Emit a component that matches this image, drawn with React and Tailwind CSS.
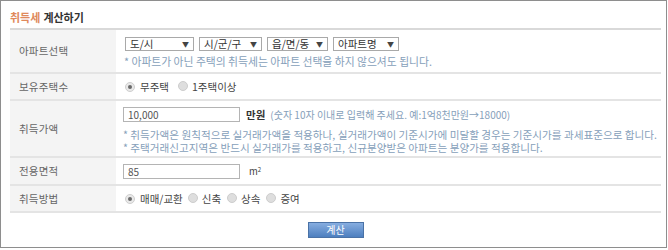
import React from "react";

const FONT = "font-['Noto_Sans_CJK_KR','Noto_Sans',sans-serif]";

function Select({ label, w }) {
  return (
    <span
      className={`inline-flex items-center justify-between h-[14px] border border-[#a9a9a9] bg-white pl-[4px] pr-[4px] text-[10.5px] leading-none text-[#333] ${w}`}
    >
      <span>{label}</span>
      <span className="text-[7px] text-[#444] ml-[4px]">▼</span>
    </span>
  );
}

function Radio({ checked }) {
  return checked ? (
    <span className="inline-flex items-center justify-center w-[10px] h-[10px] rounded-full bg-[#e9e9e9] border border-[#cfcfcf]">
      <span className="w-[4px] h-[4px] rounded-full bg-[#6a6a6a]" />
    </span>
  ) : (
    <span className="inline-block w-[10px] h-[10px] rounded-full bg-[#dedede] border border-[#cdcdcd]" />
  );
}

function Row({ label, h, children, align = "items-center" }) {
  return (
    <div className={`grid grid-cols-[106px_1fr] border-b-2 border-[#e4e4e4] ${h}`}>
      <div className="bg-[#f4f4f4] flex items-center pl-[9px] text-[10.5px] tracking-[0.2px] text-[#666]">
        {label}
      </div>
      <div className={`flex pl-[7px] ${align}`}>{children}</div>
    </div>
  );
}

export default function App() {
  return (
    <div className={`w-[668px] h-[250px] bg-white ${FONT}`}>
      <div className="w-[667px] h-[248px] border border-[#8e8e8e] pl-[9px] pr-[5px]">
        <div className="h-[27px] flex items-end pb-[5px] text-[11px] font-bold leading-none">
          <span className="text-[#e0895b]">취득세</span>
          <span className="text-[#333] ml-[3px]">계산하기</span>
        </div>
        <div className="border-t-2 border-[#d9d9d9]">
          <Row label="아파트선택" h="h-[44px]" align="items-start">
            <div className="flex flex-col pt-[7px]">
              <div className="flex gap-[5px] pl-[2px]">
                <Select label="도/시" w="w-[69px]" />
                <Select label="시/군/구" w="w-[63px]" />
                <Select label="읍/면/동" w="w-[61px]" />
                <Select label="아파트명" w="w-[66px]" />
              </div>
              <div className="mt-[4px] pl-[1px] text-[10.8px] leading-[12px] text-[#86a0ba]">
                * 아파트가 아닌 주택의 취득세는 아파트 선택을 하지 않으셔도 됩니다.
              </div>
            </div>
          </Row>
          <Row label="보유주택수" h="h-[27px]">
            <div className="flex items-center text-[10.5px] text-[#444] pl-[2px]">
              <Radio checked />
              <span className="ml-[5px]">무주택</span>
              <span className="ml-[9px]"><Radio /></span>
              <span className="ml-[4px]">1주택이상</span>
            </div>
          </Row>
          <Row label="취득가액" h="h-[57px]" align="items-start">
            <div className="flex flex-col pt-[6px]">
              <div className="flex items-center">
                <span className="w-[117px] h-[15px] border border-[#b4b4b4] bg-white pl-[4px] text-[10px] leading-[13px] text-[#555]">
                  10,000
                </span>
                <span className="ml-[6px] text-[10.5px] font-bold text-[#333]">만원</span>
                <span className="ml-[5px] text-[10px] text-[#86a0ba]">
                  (숫자 10자 이내로 입력해 주세요. 예:1억8천만원→18000)
                </span>
              </div>
              <div className="mt-[5px] text-[10.6px] leading-[13px] text-[#86a0ba] whitespace-nowrap">
                * 취득가액은 원칙적으로 실거래가액을 적용하나, 실거래가액이 기준시가에 미달할 경우는 기준시가를 과세표준으로 합니다.
              </div>
              <div className="text-[10.6px] leading-[13px] text-[#86a0ba] whitespace-nowrap">
                * 주택거래신고지역은 반드시 실거래가를 적용하고, 신규분양받은 아파트는 분양가를 적용합니다.
              </div>
            </div>
          </Row>
          <Row label="전용면적" h="h-[28px]">
            <div className="flex items-center">
              <span className="w-[117px] h-[15px] border border-[#b4b4b4] bg-white pl-[4px] text-[10px] leading-[13px] text-[#555]">
                85
              </span>
              <span className="ml-[9px] text-[9.5px] text-[#444]">
                m<sup className="text-[6px]">2</sup>
              </span>
            </div>
          </Row>
          <Row label="취득방법" h="h-[27px]">
            <div className="flex items-center text-[10.5px] text-[#444] pl-[2px]">
              <Radio checked />
              <span className="ml-[5px]">매매/교환</span>
              <span className="ml-[5px]"><Radio /></span>
              <span className="ml-[4px]">신축</span>
              <span className="ml-[6px]"><Radio /></span>
              <span className="ml-[4px]">상속</span>
              <span className="ml-[6px]"><Radio /></span>
              <span className="ml-[4px]">증여</span>
            </div>
          </Row>
        </div>
        <div className="flex justify-center pt-[9px]">
          <button className="w-[56px] h-[16px] border border-[#4a72a6] bg-gradient-to-b from-[#86ade0] to-[#4d7fbf] text-[10px] leading-none text-white">
            계산
          </button>
        </div>
      </div>
    </div>
  );
}
